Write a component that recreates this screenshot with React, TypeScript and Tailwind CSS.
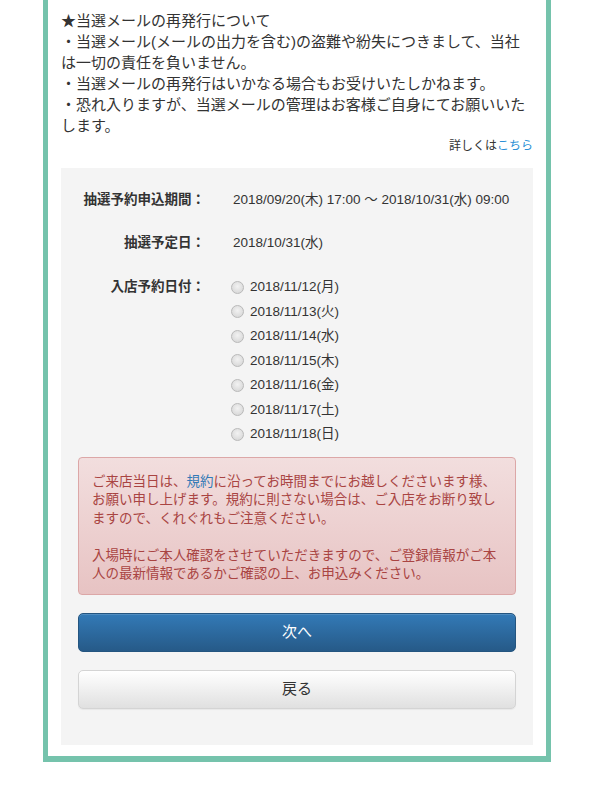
import React from "react";

const dates = [
  "2018/11/12(月)",
  "2018/11/13(火)",
  "2018/11/14(水)",
  "2018/11/15(木)",
  "2018/11/16(金)",
  "2018/11/17(土)",
  "2018/11/18(日)",
];

export default function App() {
  return (
    <div
      className="min-h-[800px] bg-white text-[#333]"
      style={{ fontFamily: '"Liberation Sans", "Noto Sans CJK JP", sans-serif' }}
    >
      <div className="ml-[43px] w-[508px] border-x-[5px] border-b-[6px] border-[#75c3ac] px-[13px] pt-[10px] pb-[11px]">
        <div className="text-[15px] leading-[21px]">
          <p>★当選メールの再発行について</p>
          <p>・当選メール(メールの出力を含む)の盗難や紛失につきまして、当社は一切の責任を負いません。</p>
          <p>・当選メールの再発行はいかなる場合もお受けいたしかねます。</p>
          <p>・恐れ入りますが、当選メールの管理はお客様ご自身にてお願いいたします。</p>
        </div>
        <div className="mt-[2px] text-right text-[12px] leading-[17px]">
          詳しくは<a className="text-[#2a8fd6]">こちら</a>
        </div>

        <div className="mt-[13px] bg-[#f4f4f4] px-[17px] pt-[20px] pb-[36px]">
          <div className="grid grid-cols-[127px_1fr] gap-x-[28px] text-[13.5px] leading-[24px]">
            <div className="text-right font-bold">抽選予約申込期間：</div>
            <div>2018/09/20(木) 17:00 ～ 2018/10/31(水) 09:00</div>

            <div className="mt-[19px] text-right font-bold">抽選予定日：</div>
            <div className="mt-[19px]">2018/10/31(水)</div>

            <div className="mt-[20px] text-right font-bold">入店予約日付：</div>
            <div className="mt-[20px] flex flex-col">
              {dates.map((d) => (
                <label key={d} className="flex h-[24.5px] items-center">
                  <span className="ml-[-2px] mr-[6px] h-[13px] w-[13px] rounded-full border border-[#b9b9b9] bg-[radial-gradient(circle_at_50%_40%,#f2f2f2,#d2d2d2)]" />
                  <span>{d}</span>
                </label>
              ))}
            </div>
          </div>

          <div className="mt-[10px] rounded-[4px] border border-[#dca7a7] bg-gradient-to-b from-[#f2dede] to-[#e7c3c3] px-[13px] pt-[15px] pb-[10px] text-[13.5px] leading-[18.5px] text-[#a94442]">
            <p>
              ご来店当日は、<a className="text-[#337ab7]">規約</a>に沿ってお時間までにお越しくださいます様、お願い申し上げます。規約に則さない場合は、ご入店をお断り致しますので、くれぐれもご注意ください。
            </p>
            <p className="mt-[18.5px]">
              入場時にご本人確認をさせていただきますので、ご登録情報がご本人の最新情報であるかご確認の上、お申込みください。
            </p>
          </div>

          <button className="mt-[18px] flex h-[39px] w-full items-center justify-center rounded-[5px] border border-[#245580] bg-gradient-to-b from-[#337ab7] to-[#265a88] text-[15px] text-white shadow-[inset_0_1px_0_rgba(255,255,255,0.15)]">
            次へ
          </button>
          <button className="mt-[18px] flex h-[39px] w-full items-center justify-center rounded-[5px] border border-[#d4d4d4] bg-gradient-to-b from-white to-[#e0e0e0] text-[15px] text-[#333] shadow-[0_1px_1px_rgba(0,0,0,0.05)]">
            戻る
          </button>
        </div>
      </div>
    </div>
  );
}
